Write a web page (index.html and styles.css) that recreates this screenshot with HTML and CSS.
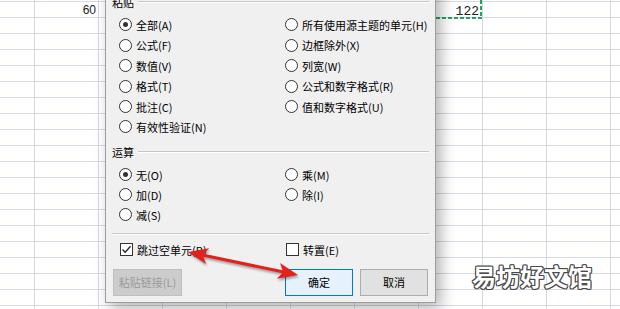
FILE: index.html
```html
<!DOCTYPE html>
<html lang="zh-CN">
<head>
    <meta charset="UTF-8">
    <title>选择性粘贴</title>
    <link rel="stylesheet" href="styles.css">
</head>
<body>
    <div class="sheet">
        <div class="cell num">60</div>
        <div class="cell copied">122</div>
    </div>

    <div class="dialog">
        <div class="group-title">粘贴</div>
        <div class="options paste">
            <div class="opt"><span class="radio on"></span>全部(A)</div>
            <div class="opt"><span class="radio"></span>所有使用源主题的单元(H)</div>
            <div class="opt"><span class="radio"></span>公式(F)</div>
            <div class="opt"><span class="radio"></span>边框除外(X)</div>
            <div class="opt"><span class="radio"></span>数值(V)</div>
            <div class="opt"><span class="radio"></span>列宽(W)</div>
            <div class="opt"><span class="radio"></span>格式(T)</div>
            <div class="opt"><span class="radio"></span>公式和数字格式(R)</div>
            <div class="opt"><span class="radio"></span>批注(C)</div>
            <div class="opt"><span class="radio"></span>值和数字格式(U)</div>
            <div class="opt"><span class="radio"></span>有效性验证(N)</div>
        </div>

        <div class="group-title calc">运算</div>
        <div class="options ops">
            <div class="opt"><span class="radio on"></span>无(O)</div>
            <div class="opt"><span class="radio"></span>乘(M)</div>
            <div class="opt"><span class="radio"></span>加(D)</div>
            <div class="opt"><span class="radio"></span>除(I)</div>
            <div class="opt"><span class="radio"></span>减(S)</div>
        </div>

        <div class="divider"></div>

        <div class="options checks">
            <div class="opt">
                <span class="box">
                    <svg width="11" height="11" viewBox="0 0 11 11"><path d="M1.5 5.5 L4.2 8.2 L9.5 2.2" fill="none" stroke="#222" stroke-width="1.3"/></svg>
                </span>跳过空单元(B)
            </div>
            <div class="opt"><span class="box"></span>转置(E)</div>
        </div>

        <div class="buttons">
            <button class="btn" disabled>粘贴链接(L)</button>
            <button class="btn primary">确定</button>
            <button class="btn">取消</button>
        </div>
    </div>

    <svg class="arrow" width="620" height="309" viewBox="0 0 620 309">
        <line x1="200" y1="254.5" x2="286" y2="272.5" stroke="#e4201b" stroke-width="3"/>
        <polygon points="188,252 209.2,248.3 202.7,255.1 206,264" fill="#e4201b"/>
        <polygon points="298,275 276.8,278.7 283.3,271.9 280,263" fill="#e4201b"/>
    </svg>

    <div class="watermark">易坊好文馆</div>
</body>
</html>
```

FILE: styles.css
```css
body {
    margin: 0;
    width: 620px;
    height: 309px;
    overflow: hidden;
    position: relative;
    background: #fff;
    font-family: "Noto Sans CJK SC", sans-serif;
}

/* spreadsheet behind the dialog */
.sheet {
    height: 309px;
    display: grid;
    grid-template-columns: 34px repeat(9, 64px);
    grid-template-rows: 18px;
    background-image:
        linear-gradient(#d5d9e6 1px, transparent 1px),
        linear-gradient(90deg, #d5d9e6 1px, transparent 1px);
    background-size: 100% 16px, 64px 100%;
    background-position: 0 1px, 34px 0;
}
.cell {
    text-align: right;
}
.num {
    grid-column: 2;
    align-self: end;
    font-family: "Liberation Sans", sans-serif;
    font-size: 12px;
    line-height: 14px;
    padding: 0 2px 1px 0;
    color: #222;
}
.copied {
    grid-column: 8;
    box-sizing: border-box;
    height: 19px;
    padding: 5px 3px 0 0;
    font-family: "Liberation Mono", monospace;
    font-size: 13px;
    line-height: 14px;
    color: #222;
    background:
        repeating-linear-gradient(90deg, #23a35e 0 4px, transparent 4px 6px) left bottom / 100% 2px no-repeat,
        repeating-linear-gradient(180deg, #23a35e 0 4px, transparent 4px 6px) right top / 2px 100% no-repeat;
}

/* paste special dialog */
.dialog {
    position: absolute;
    left: 105px;
    top: -20px;
    width: 331px;
    height: 323px;
    box-sizing: border-box;
    padding: 14px 6px 0 6px;
    border: 1px solid #9c9c9c;
    background: #f0f0f0;
    box-shadow: 5px 5px 14px rgba(0, 0, 0, 0.3);
    display: flex;
    flex-direction: column;
    font-size: 11px;
    color: #000;
}
.group-title {
    display: flex;
    align-items: center;
    gap: 4px;
    line-height: 14px;
}
.group-title::after {
    content: "";
    flex: 1;
    border-top: 1px solid #c6c6c6;
    border-bottom: 1px solid #fff;
}
.group-title.calc {
    margin-top: 7.8px;
}
.options {
    display: grid;
    grid-template-columns: 166px 1fr;
    padding-left: 7px;
}
.paste {
    margin-top: 5.8px;
    grid-auto-rows: 20.4px;
}
.ops {
    margin-top: 6px;
    grid-auto-rows: 20px;
}
.checks {
    margin-top: 5px;
    grid-auto-rows: 20px;
    padding-left: 8px;
}
.opt {
    display: flex;
    align-items: center;
    gap: 4px;
    white-space: nowrap;
}
.radio {
    width: 11px;
    height: 11px;
    border: 1px solid #333;
    border-radius: 50%;
    background: #fff;
    display: flex;
    align-items: center;
    justify-content: center;
}
.radio.on::after {
    content: "";
    width: 5px;
    height: 5px;
    border-radius: 50%;
    background: #333;
}
.box {
    width: 11px;
    height: 11px;
    border: 1px solid #333;
    background: #fff;
    display: flex;
}
.divider {
    margin-top: 8px;
    border-top: 1px solid #c6c6c6;
    border-bottom: 1px solid #fff;
}
.buttons {
    margin-top: 9px;
    display: flex;
    gap: 7px;
    padding: 0 1px;
}
.btn {
    width: 68px;
    height: 27px;
    padding: 0;
    border: 1px solid #adadad;
    background: #e1e1e1;
    font-family: inherit;
    font-size: 11px;
    color: #000;
}
.btn:disabled {
    width: 69px;
    border-color: #bfbfbf;
    background: #cccccc;
    color: #9a9a9a;
}
.btn.primary {
    margin-left: auto;
    border-color: #0078d7;
    background: #e5f1fb;
}

/* annotations on top */
.arrow {
    position: absolute;
    left: 0;
    top: 0;
    pointer-events: none;
    filter: drop-shadow(1px 2px 1px rgba(0, 0, 0, 0.35));
}
.watermark {
    position: absolute;
    left: 472px;
    top: 261px;
    font-size: 24px;
    line-height: 30px;
    font-weight: 700;
    color: #fff;
    text-shadow:
        1px 0 #4a4a4a, -1px 0 #4a4a4a, 0 1px #4a4a4a, 0 -1px #4a4a4a,
        1px 1px #4a4a4a, -1px -1px #4a4a4a, 1px -1px #4a4a4a, -1px 1px #4a4a4a;
}
```
